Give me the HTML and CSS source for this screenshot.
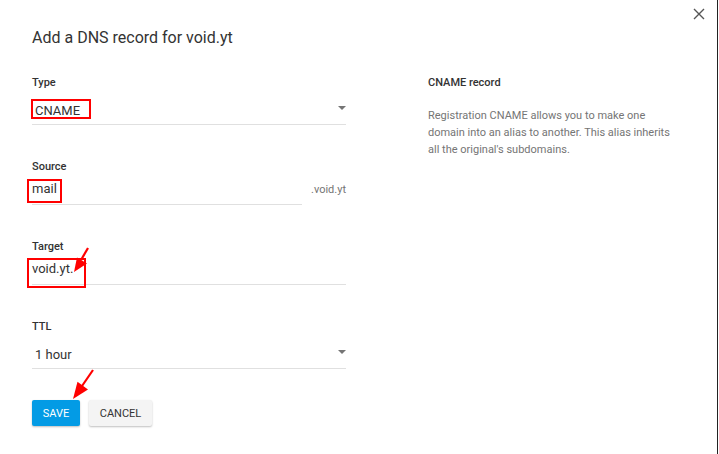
FILE: index.html
```html
<!DOCTYPE html>
<html lang="en">
<head>
  <meta charset="UTF-8" />
  <title>Add a DNS record for void.yt</title>
  <link rel="stylesheet" href="styles.css">
</head>
<body>
  <div class="dialog">
    <button class="close-btn" aria-label="Close">
      <svg width="12" height="12" viewBox="0 0 12 12"><path d="M1 1 L11 11 M11 1 L1 11" stroke="#555" stroke-width="1.4" fill="none"/></svg>
    </button>

    <h1 class="title">Add a DNS record for void.yt</h1>

    <div class="columns">
      <form class="form">
        <div class="field">
          <label>Type</label>
          <div class="select">
            <span>CNAME</span>
            <span class="caret"></span>
          </div>
          <div class="mark mark-type"></div>
        </div>

        <div class="field">
          <label>Source</label>
          <div class="input-row">
            <div class="input">mail</div>
            <span class="suffix">.void.yt</span>
          </div>
          <div class="mark mark-source"></div>
        </div>

        <div class="field">
          <label>Target</label>
          <div class="input">void.yt.</div>
          <div class="mark mark-target"></div>
        </div>

        <div class="field">
          <label>TTL</label>
          <div class="select">
            <span>1 hour</span>
            <span class="caret"></span>
          </div>
        </div>

        <div class="actions">
          <button type="button" class="btn btn-save">Save</button>
          <button type="button" class="btn btn-cancel">Cancel</button>
        </div>
      </form>

      <aside class="help">
        <h2>CNAME record</h2>
        <p>Registration CNAME allows you to make one domain into an alias to another. This alias inherits all the original's subdomains.</p>
      </aside>
    </div>

    <!-- red annotation arrows -->
    <svg class="arrows" width="719" height="454" viewBox="0 0 719 454">
      <line x1="88" y1="248" x2="81" y2="260" stroke="#f00" stroke-width="2.2"/>
      <polygon points="74,272 87,263.5 77,257.5" fill="#f00"/>
      <line x1="93" y1="370" x2="82" y2="386" stroke="#f00" stroke-width="2.2"/>
      <polygon points="73,399 88,389.5 77.5,381.8" fill="#f00"/>
    </svg>
  </div>
</body>
</html>
```

FILE: styles.css
```css
html, body {
  margin: 0;
  background: #fff;
}
body {
  font-family: 'Roboto', 'Liberation Sans', sans-serif;
  color: #333;
}
.dialog {
  position: relative;
  width: 718px;
  height: 454px;
  box-sizing: border-box;
  border-right: 1px solid #222;
  padding: 26px 32px 0 32px;
}
.close-btn {
  position: absolute;
  top: 8px;
  right: 12px;
  border: none;
  background: none;
  padding: 0;
  width: 12px;
  height: 12px;
  cursor: pointer;
}
.close-btn svg {
  display: block;
}
.title {
  margin: 0 0 25px 0;
  font-size: 16px;
  line-height: 24px;
  font-weight: 400;
  color: #333;
}
.columns {
  display: flex;
}
.form {
  width: 314px;
}
.field {
  position: relative;
  margin-bottom: 34px;
}
.field label {
  display: block;
  padding-top: 1px;
  font-size: 11px;
  line-height: 14px;
  font-weight: 500;
  color: #333;
}
.select {
  display: flex;
  justify-content: space-between;
  align-items: center;
  padding: 13px 0 5px 3px;
  font-size: 13px;
  line-height: 16px;
  border-bottom: 1px solid #e0e0e0;
}
.caret {
  width: 0;
  height: 0;
  border-left: 4px solid transparent;
  border-right: 4px solid transparent;
  border-top: 4px solid #757575;
  margin-top: -6px;
}
.input {
  flex: 1;
  padding: 7px 0 7px 0;
  font-size: 13px;
  line-height: 16px;
  border-bottom: 1px solid #e0e0e0;
}
.input-row {
  display: flex;
  align-items: center;
  width: 314px;
}
.input-row .input {
  flex: 0 0 270px;
}
.suffix {
  margin-left: 9px;
  font-size: 11px;
  color: #757575;
  margin-top: -1px;
}
.mark {
  position: absolute;
  border: 2px solid #f00;
  box-sizing: border-box;
}
.mark-type {
  left: -1px;
  top: 24px;
  width: 60px;
  height: 20px;
}
.mark-source {
  left: -5px;
  top: 20px;
  width: 35px;
  height: 24px;
}
.mark-target {
  left: -5px;
  top: 19px;
  width: 59px;
  height: 30px;
}
.actions {
  display: flex;
  gap: 9px;
  margin-top: -3px;
}
.btn {
  height: 26px;
  border: none;
  border-radius: 2px;
  font-family: inherit;
  font-size: 11px;
  text-transform: uppercase;
  padding: 0 10px;
  box-shadow: 0 1px 2px rgba(0, 0, 0, 0.25);
  cursor: pointer;
}
.btn-save {
  width: 48px;
  background: #039be5;
  color: #fff;
}
.btn-cancel {
  width: 63px;
  background: #f4f4f4;
  color: #333;
}
.help {
  margin-left: 82px;
  width: 250px;
}
.help h2 {
  margin: 0 0 17px 0;
  padding-top: 1px;
  font-size: 11px;
  line-height: 14px;
  font-weight: 500;
  color: #333;
}
.help p {
  margin: 0;
  font-size: 11px;
  line-height: 17px;
  color: #757575;
}
.arrows {
  position: absolute;
  left: 0;
  top: 0;
  pointer-events: none;
}
```
